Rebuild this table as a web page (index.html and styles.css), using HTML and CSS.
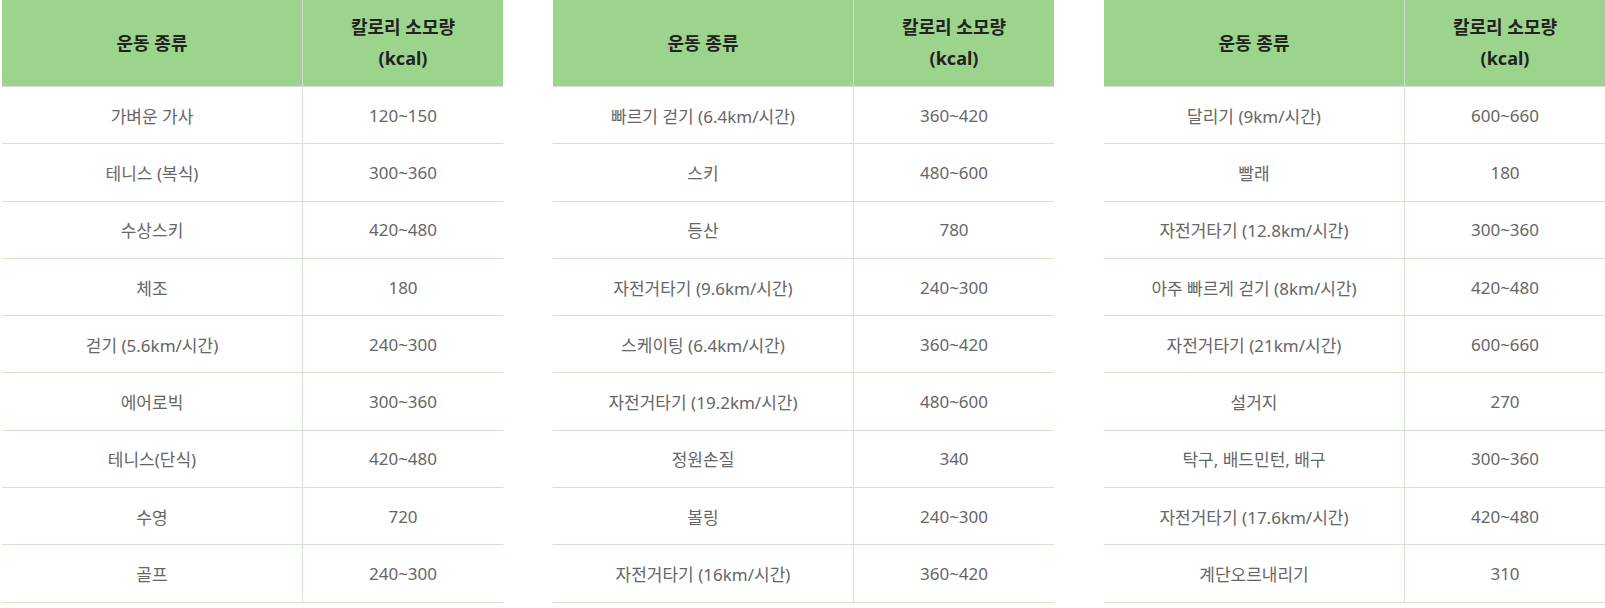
FILE: index.html
```html
<!DOCTYPE html>
<html lang="ko">
<head>
<meta charset="utf-8">
<link rel="stylesheet" href="styles.css">
</head>
<body>
<div class="wrap">
  <table class="kcal">
    <thead>
      <tr><th class="c1">운동 종류</th><th class="c2">칼로리 소모량<br>(kcal)</th></tr>
    </thead>
    <tbody>
      <tr><td>가벼운 가사</td><td>120~150</td></tr>
      <tr><td>테니스 (복식)</td><td>300~360</td></tr>
      <tr><td>수상스키</td><td>420~480</td></tr>
      <tr><td>체조</td><td>180</td></tr>
      <tr><td>걷기 (5.6km/시간)</td><td>240~300</td></tr>
      <tr><td>에어로빅</td><td>300~360</td></tr>
      <tr><td>테니스(단식)</td><td>420~480</td></tr>
      <tr><td>수영</td><td>720</td></tr>
      <tr><td>골프</td><td>240~300</td></tr>
    </tbody>
  </table>
  <table class="kcal">
    <thead>
      <tr><th class="c1">운동 종류</th><th class="c2">칼로리 소모량<br>(kcal)</th></tr>
    </thead>
    <tbody>
      <tr><td>빠르기 걷기 (6.4km/시간)</td><td>360~420</td></tr>
      <tr><td>스키</td><td>480~600</td></tr>
      <tr><td>등산</td><td>780</td></tr>
      <tr><td>자전거타기 (9.6km/시간)</td><td>240~300</td></tr>
      <tr><td>스케이팅 (6.4km/시간)</td><td>360~420</td></tr>
      <tr><td>자전거타기 (19.2km/시간)</td><td>480~600</td></tr>
      <tr><td>정원손질</td><td>340</td></tr>
      <tr><td>볼링</td><td>240~300</td></tr>
      <tr><td>자전거타기 (16km/시간)</td><td>360~420</td></tr>
    </tbody>
  </table>
  <table class="kcal">
    <thead>
      <tr><th class="c1">운동 종류</th><th class="c2">칼로리 소모량<br>(kcal)</th></tr>
    </thead>
    <tbody>
      <tr><td>달리기 (9km/시간)</td><td>600~660</td></tr>
      <tr><td>빨래</td><td>180</td></tr>
      <tr><td>자전거타기 (12.8km/시간)</td><td>300~360</td></tr>
      <tr><td>아주 빠르게 걷기 (8km/시간)</td><td>420~480</td></tr>
      <tr><td>자전거타기 (21km/시간)</td><td>600~660</td></tr>
      <tr><td>설거지</td><td>270</td></tr>
      <tr><td>탁구, 배드민턴, 배구</td><td>300~360</td></tr>
      <tr><td>자전거타기 (17.6km/시간)</td><td>420~480</td></tr>
      <tr><td>계단오르내리기</td><td>310</td></tr>
    </tbody>
  </table>
</div>
</body>
</html>
```

FILE: styles.css
```css
html, body {
  margin: 0;
  padding: 0;
  background: #ffffff;
}
body {
  font-family: "Noto Sans", "Noto Sans CJK KR", sans-serif;
}
.wrap {
  display: flex;
  gap: 50px;
  padding-left: 2px;
}
.kcal {
  width: 500px;
  border-collapse: collapse;
  table-layout: fixed;
}
.kcal .c1 { width: 300px; }
.kcal .c2 { width: 200px; }
.kcal th {
  background: #9cd48d;
  color: #222222;
  font-size: 18px;
  font-weight: 700;
  line-height: 31px;
  height: 86px;
  padding: 0;
  text-align: center;
  vertical-align: middle;
  border-bottom: 1px solid #d8dcd6;
}
.kcal th + th {
  border-left: 1px solid #d4d8d2;
}
.kcal td {
  height: 56.3px;
  padding: 0;
  text-align: center;
  vertical-align: middle;
  font-size: 17px;
  color: #666666;
  border-bottom: 1px solid #d3e3cc;
}
.kcal td + td {
  border-left: 1px solid #d3e3cc;
}
```
